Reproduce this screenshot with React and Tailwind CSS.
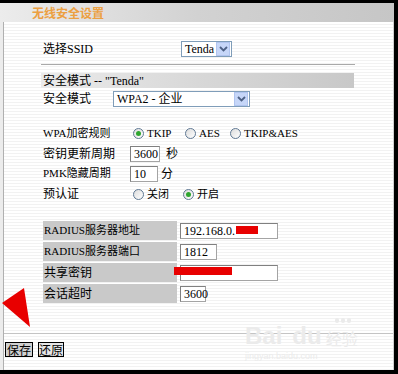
import React from "react";

const Chevron = () => (
  <svg width="9" height="6" viewBox="0 0 9 6">
    <path d="M1 1 L4.5 4.5 L8 1" stroke="#4d6185" strokeWidth="1.8" fill="none" />
  </svg>
);

const Select = ({ className, text }) => (
  <div className={`flex items-center h-[16px] border border-[#7f9db9] bg-white ${className}`}>
    <span className="flex-1 pl-[3px] leading-none whitespace-pre">{text}</span>
    <span className="w-[14px] h-[14px] mr-px bg-[#c6d6f8] border border-[#b0c4ef] flex items-center justify-center">
      <Chevron />
    </span>
  </div>
);

const Radio = ({ checked, label, className }) => (
  <div className={`flex items-center gap-[3px] ${className}`}>
    <span className="w-[11px] h-[11px] rounded-full border border-[#5f7893] bg-gradient-to-br from-[#dcdcdc] to-white flex items-center justify-center">
      {checked && <span className="w-[5px] h-[5px] rounded-full bg-[#2fa62f]" />}
    </span>
    <span className="text-[11px]">{label}</span>
  </div>
);

const Input = ({ className, children }) => (
  <div className={`relative h-[16px] border border-[#a4a4a4] border-t-[#808080] border-l-[#808080] bg-white flex items-center pl-[3px] leading-none ${className}`}>
    {children}
  </div>
);

export default function App() {
  return (
    <div className="relative w-[398px] h-[374px] bg-black pt-[3px] pr-[4px] pb-[4px] text-[12px] text-black font-['Liberation_Serif','Noto_Sans_CJK_SC',serif]">
      <div className="h-full flex flex-col bg-white">
        <div className="h-[19px] shrink-0 bg-gradient-to-r from-[#ececec] via-[#d2d2d2] to-[#c6c6c6] pl-[32px] flex items-center text-[#eca042] font-bold text-[12px] font-['Noto_Sans_CJK_SC',sans-serif]">
          无线安全设置
        </div>
        <div className="flex-1 flex min-h-0">
          <div className="w-[4px] bg-[#ececec] border-r border-[#b0b0b0] shrink-0" />
          <div className="relative flex-1 flex flex-col border-r border-[#cfcfcf] bg-[repeating-linear-gradient(to_bottom,#ffffff_0px,#ffffff_2px,#f2f2f2_2px,#f2f2f2_3px)]">
            {/* Baidu watermark */}
            <div className="absolute left-[241px] top-[296px] flex flex-col items-start text-[#ebebeb] leading-none pointer-events-none">
              <div className="ml-[90px] flex gap-[2px] mb-[1px]">
                <span className="w-[4px] h-[5px] rounded-full bg-[#ebebeb]" />
                <span className="w-[4px] h-[5px] rounded-full bg-[#ebebeb]" />
                <span className="w-[4px] h-[5px] rounded-full bg-[#ebebeb]" />
              </div>
              <div className="flex items-end">
                <span className="text-[24px] font-bold font-['Liberation_Sans',sans-serif]">Bai</span>
                <span className="w-[10px]" />
                <span className="text-[24px] font-bold font-['Liberation_Sans',sans-serif]">du</span>
                <span className="text-[16px] ml-[4px] mb-[2px] font-['Noto_Sans_CJK_SC',sans-serif]">经验</span>
              </div>
              <span className="text-[9px] mt-[4px] font-['Liberation_Sans',sans-serif]">jingyan.baidu.com</span>
            </div>

            {/* 选择SSID */}
            <div className="mt-[19px] h-[16px] ml-[39px] flex items-center">
              <span className="w-[138px]">选择SSID</span>
              <Select className="w-[51px]" text="Tenda" />
            </div>

            <div className="mt-[7px] ml-[37px] w-[314px] h-px bg-[#a9a9a9]" />

            <div className="mt-[8px] ml-[37px] w-[313px] h-[15px] bg-gradient-to-r from-[#ebebeb] via-[#d8d8d8] to-[#c8c8c8] flex items-center pl-[2px]">
              安全模式 -- "Tenda"
            </div>

            <div className="mt-[3px] h-[16px] ml-[39px] flex items-center">
              <span className="w-[70px]">安全模式</span>
              <Select className="w-[137px]" text="WPA2 - 企业" />
            </div>

            <div className="mt-[19px] h-[14px] ml-[39px] flex items-center">
              <span className="w-[90px] text-[11px]">WPA加密规则</span>
              <Radio checked label="TKIP" className="w-[52px]" />
              <Radio label="AES" className="w-[45px]" />
              <Radio label="TKIP&AES" />
            </div>

            <div className="mt-[6px] h-[15px] ml-[39px] flex items-center">
              <span className="w-[87px]">密钥更新周期</span>
              <Input className="w-[30px] h-[15px]">3600</Input>
              <span className="ml-[6px]">秒</span>
            </div>

            <div className="mt-[5px] h-[15px] ml-[39px] flex items-center">
              <span className="w-[87px] text-[11px]">PMK隐藏周期</span>
              <Input className="w-[28px] h-[15px]">10</Input>
              <span className="ml-[3px]">分</span>
            </div>

            <div className="mt-[6px] h-[14px] ml-[39px] flex items-center">
              <span className="w-[90px]">预认证</span>
              <Radio label="关闭" className="w-[50px]" />
              <Radio checked label="开启" />
            </div>

            <div className="mt-[20px] ml-[39px] flex flex-col gap-[2px]">
              <div className="h-[19px] flex items-center">
                <div className="w-[134px] h-full bg-[#c9c9c9] flex items-center pl-[1px] text-[11px]">RADIUS服务器地址</div>
                <Input className="ml-[3px] w-[98px]">
                  192.168.0.
                  <span className="absolute left-[55px] top-[2px] w-[22px] h-[8px] bg-[#e80000]" />
                </Input>
              </div>
              <div className="h-[19px] flex items-center">
                <div className="w-[134px] h-full bg-[#c9c9c9] flex items-center pl-[1px] text-[11px]">RADIUS服务器端口</div>
                <Input className="ml-[3px] w-[37px]">1812</Input>
              </div>
              <div className="relative h-[19px] flex items-center">
                <div className="w-[134px] h-full bg-[#c9c9c9] flex items-center pl-[1px]">共享密钥</div>
                <Input className="ml-[3px] w-[98px]" />
                <span className="absolute left-[131px] top-[4px] w-[58px] h-[8px] bg-[#e80000]" />
              </div>
              <div className="h-[19px] flex items-center">
                <div className="w-[134px] h-full bg-[#c9c9c9] flex items-center pl-[1px]">会话超时</div>
                <Input className="ml-[3px] w-[26px]">3600</Input>
              </div>
            </div>

            <div className="mt-[30px] w-full h-px bg-[#c4c4c4]" />

            <div className="mt-[8px] ml-px flex gap-[5px]">
              <button className="h-[15px] w-[28px] bg-[#d0d0d0] border border-black flex items-center justify-center leading-none font-['Noto_Sans_CJK_SC',sans-serif] text-[12px]">保存</button>
              <button className="h-[15px] w-[26px] bg-[#e6e6e6] border border-black flex items-center justify-center leading-none font-['Noto_Sans_CJK_SC',sans-serif] text-[12px]">还原</button>
            </div>
          </div>
        </div>
      </div>
      <svg className="absolute left-0 top-[285px] pointer-events-none" width="34" height="45" viewBox="0 0 34 45">
        <polygon points="24,3 2,18 30,42" fill="#e80000" />
      </svg>
    </div>
  );
}
